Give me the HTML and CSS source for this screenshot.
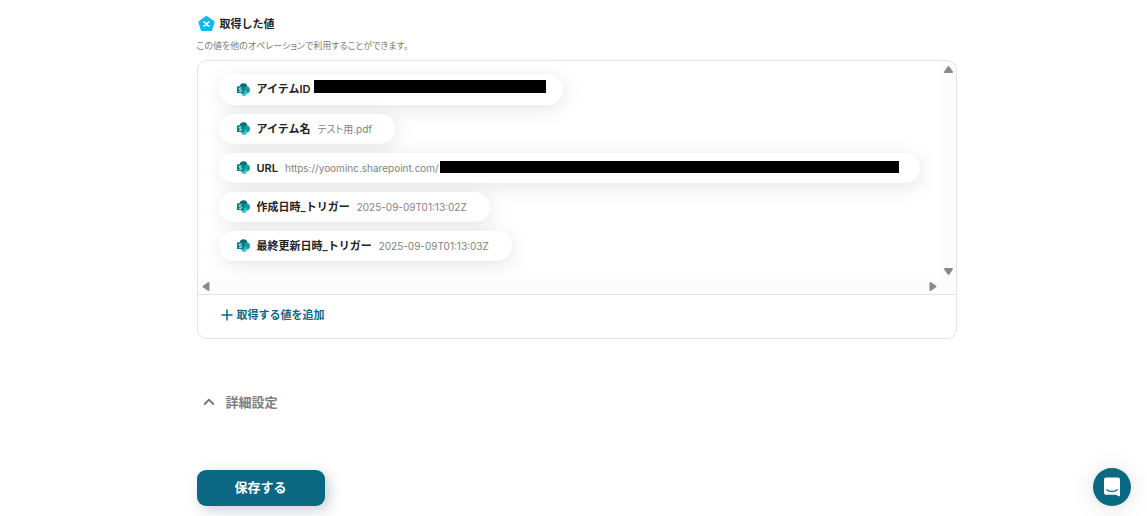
FILE: index.html
```html
<!DOCTYPE html>
<html lang="ja">
<head>
<meta charset="utf-8">
<meta name="viewport" content="width=device-width, initial-scale=1">
<title>取得した値</title>
<link rel="stylesheet" href="styles.css">
</head>
<body>
<svg class="defs" aria-hidden="true">
  <symbol id="sharepoint" viewBox="0 0 16 16">
    <circle cx="8" cy="5.300" r="4.100" fill="#036c70"/>
    <circle cx="11.200" cy="8.600" r="3.700" fill="#1a9ba1"/>
    <circle cx="8.600" cy="11.900" r="2.900" fill="#37c6d0"/>
    <path d="M5 4.600h4.200v7.600H5z" fill="#03595c" opacity=".4"/>
    <rect x="1" y="4.600" width="7.200" height="7.200" rx=".7" fill="#038387"/>
    <path d="M5.900 6.600C4.900 6 3.400 6.200 3.400 7.200c0 1.200 2.600.8 2.600 2 0 1.100-1.700 1.200-2.700.6" fill="none" stroke="#fff" stroke-width="1"/>
  </symbol>
</svg>
<main class="page">
  <header class="heading">
    <svg class="badge" viewBox="0 0 18 18" aria-hidden="true">
      <path d="M9 2.200 15.800 7.100 13.400 14.800H4.600L2.200 7.100Z" fill="#11b9ee" stroke="#11b9ee" stroke-width="2.600" stroke-linejoin="round"/>
      <path d="M5.900 7c2.800-.5 2.800 5 6.200 4M12.100 7C9.300 6.500 9.200 11.600 5.900 11" fill="none" stroke="#fff" stroke-width="1.400"/>
    </svg>
    <h1 class="title">取得した値</h1>
  </header>
  <p class="note">この値を他のオペレーションで利用することができます。</p>

  <section class="panel">
    <div class="scroller">
      <ul class="values">
        <li class="pill"><svg class="app"><use href="#sharepoint"/></svg><span class="name">アイテムID</span><span class="mask mask-id"></span></li>
        <li class="pill"><svg class="app"><use href="#sharepoint"/></svg><span class="name">アイテム名</span><span class="value">テスト用.pdf</span></li>
        <li class="pill"><svg class="app"><use href="#sharepoint"/></svg><span class="name">URL</span><span class="value">https://yoominc.sharepoint.com/</span><span class="mask mask-url"></span></li>
        <li class="pill"><svg class="app"><use href="#sharepoint"/></svg><span class="name">作成日時_トリガー</span><span class="value">2025-09-09T01:13:02Z</span></li>
        <li class="pill"><svg class="app"><use href="#sharepoint"/></svg><span class="name">最終更新日時_トリガー</span><span class="value">2025-09-09T01:13:03Z</span></li>
      </ul>
      <div class="bar bar-y">
        <svg class="arrow" viewBox="0 0 15 15"><path d="M7.500 6 11 11H4Z"/></svg>
        <svg class="arrow" viewBox="0 0 15 15"><path d="M7.500 10 11 5H4Z"/></svg>
      </div>
      <div class="bar bar-x">
        <svg class="arrow" viewBox="0 0 15 15"><path d="M5.500 7.500 10.500 4V11Z"/></svg>
        <svg class="arrow" viewBox="0 0 15 15"><path d="M9.500 7.500 4.500 4V11Z"/></svg>
      </div>
    </div>
    <button class="add" type="button">
      <svg class="plus" viewBox="0 0 12 12" aria-hidden="true"><path d="M6 .5V11.500M.5 6H11.500"/></svg>
      取得する値を追加
    </button>
  </section>

  <button class="details" type="button">
    <svg class="chevron" viewBox="0 0 12 12" aria-hidden="true"><path d="M1.200 8.500 6 3.700 10.800 8.500"/></svg>
    詳細設定
  </button>
  <button class="save" type="button">保存する</button>
</main>
<button class="chat" type="button" aria-label="チャット">
  <svg class="chat-icon" viewBox="0 0 18 20" aria-hidden="true">
    <path d="M3 .5H15a2 2 0 0 1 2 2V19.500L12.500 17.700H3a2 2 0 0 1-2-2V2.500a2 2 0 0 1 2-2Z" fill="#fff"/>
    <path d="M3.800 12.700c3 2.300 7.400 2.300 10.400 0" fill="none" stroke="#0b6882" stroke-width="1.200" stroke-linecap="round"/>
  </svg>
</button>
</body>
</html>
```
FILE: styles.css
```css
* { box-sizing: border-box; }
body {
  margin: 0;
  background: #fff;
  color: #222;
  font-family: Inter, "Noto Sans CJK JP", sans-serif;
  line-height: 16px;
}
button {
  border: 0;
  padding: 0;
  background: none;
  font: inherit;
  cursor: pointer;
}
.defs { position: absolute; width: 0; height: 0; }
.page {
  display: flex;
  flex-direction: column;
  align-items: flex-start;
  max-width: 800px;
  margin: 0 auto;
  padding: 14px 17px 10px 23px;
}
.heading { display: flex; align-items: center; gap: 4px; height: 20px; }
.badge { width: 19px; height: 18px; }
.title { margin: 0; font-size: 11px; font-weight: 600; }
.note {
  margin: 4px 0 6px;
  font-size: 9px;
  color: #7c7c7c;
  font-feature-settings: "palt";
}
.panel {
  width: 100%;
  border: 1px solid #e3e3e3;
  border-radius: 10px;
  overflow: hidden;
}
.scroller {
  display: grid;
  grid-template-columns: minmax(0, 1fr) 15px;
  border-bottom: 1px solid #e3e3e3;
}
.values {
  display: flex;
  flex-direction: column;
  align-items: flex-start;
  gap: 9px;
  margin: 0;
  padding: 13px 20px 18px 21px;
  list-style: none;
  overflow: hidden;
}
.pill {
  display: flex;
  align-items: center;
  height: 31px;
  padding: 0 23px 1px 17px;
  border-radius: 16px;
  background: #fff;
  box-shadow: 2px 4px 20px rgba(0, 0, 0, .1);
  white-space: nowrap;
}
.pill + .pill { height: 30px; }
.app { width: 15px; height: 15px; margin-right: 6px; }
.name { font-size: 11px; font-weight: 600; }
.value {
  margin-left: 7px;
  font-size: 10px;
  color: #828282;
  font-feature-settings: "palt";
}
.mask { height: 12px; background: #000; }
.mask-id { width: 232px; height: 13px; margin: 0 -6px 5px 4px; }
.mask-url { width: 459px; margin: 0 -2px 1px 1px; }
.bar { display: flex; justify-content: space-between; background: #fcfcfc; }
.bar-y { flex-direction: column; }
.bar-x { grid-column: 1 / -1; height: 15px; padding-right: 15px; }
.arrow { width: 15px; height: 15px; fill: #898989; stroke: #898989; stroke-width: 2; stroke-linejoin: round; }
.add {
  display: flex;
  align-items: center;
  gap: 4px;
  margin: 0 23px 3px;
  height: 40px;
  color: #0b6882;
  font-size: 11px;
  font-weight: 600;
}
.plus { width: 12px; height: 12px; fill: none; stroke: #0b6882; stroke-width: 1.500; }
.details {
  display: flex;
  align-items: center;
  gap: 11px;
  margin: 52px 6px 58px;
  height: 21px;
  color: #808080;
  font-size: 13px;
  font-weight: 600;
}
.chevron { width: 12px; height: 12px; fill: none; stroke: #707070; stroke-width: 1.800; }
.save {
  width: 128px;
  height: 36px;
  padding-bottom: 2px;
  border-radius: 9px;
  background: #0b6882;
  color: #fff;
  font-size: 13px;
  font-weight: 700;
  box-shadow: 4px 4px 14px rgba(0, 30, 50, .22);
}
.chat {
  position: fixed;
  right: 16px;
  bottom: 10px;
  display: grid;
  place-items: center;
  width: 38px;
  height: 38px;
  border-radius: 50%;
  background: #0b6882;
  box-shadow: 0 1px 6px rgba(0, 0, 0, .06), 0 2px 24px rgba(0, 0, 0, .12);
}
.chat-icon { width: 18px; height: 20px; }
```
